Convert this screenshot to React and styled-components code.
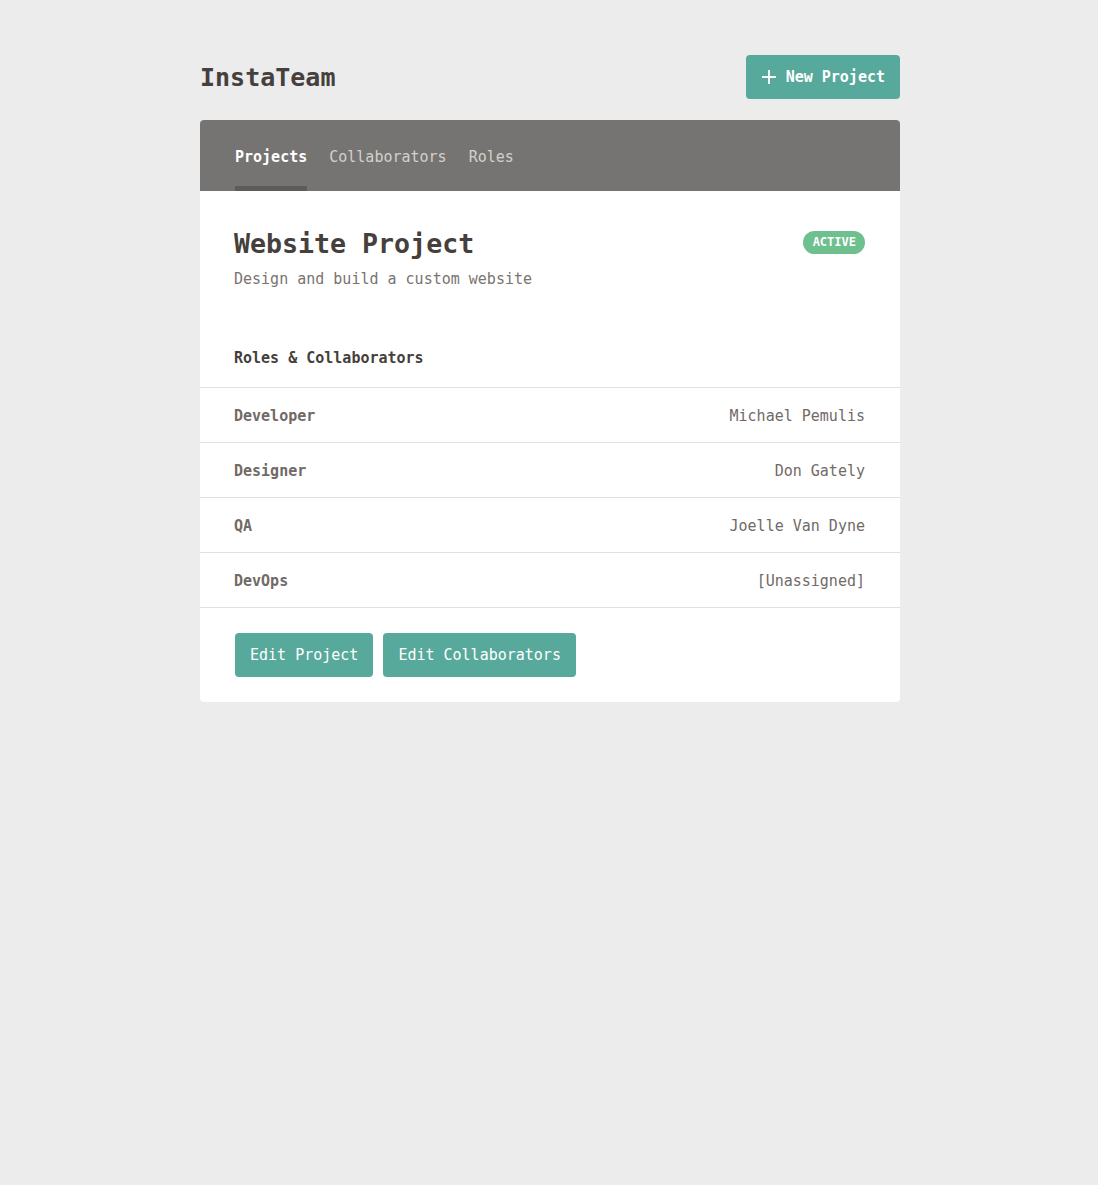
import React from 'react';
import styled, { createGlobalStyle } from 'styled-components';

const GlobalStyle = createGlobalStyle`
  body {
    margin: 0;
    padding-left: 2px;
    background-color: #ececec;
    font-family: 'DejaVu Sans Mono', 'Liberation Mono', monospace;
    color: #45403c;
  }
`;

const Page = styled.div`
  width: 700px;
  margin: 0 auto;
  padding-top: 55px;
`;

const Header = styled.header`
  display: flex;
  align-items: center;
  justify-content: space-between;
  height: 44px;
  margin-bottom: 21px;
`;

const Logo = styled.h1`
  margin: 0;
  font-size: 25px;
  font-weight: bold;
  color: #45403c;
`;

const Button = styled.button`
  display: inline-flex;
  align-items: center;
  gap: 10px;
  height: 44px;
  padding: 0 15px 0 ${(p) => (p.$bold ? '16px' : '15px')};
  border: none;
  border-radius: 4px;
  background-color: #57a99b;
  color: #fff;
  font-family: inherit;
  font-size: 15px;
  font-weight: ${(p) => (p.$bold ? 'bold' : 'normal')};
  cursor: pointer;
`;

const Card = styled.div`
  background-color: #fff;
  border-radius: 4px;
  overflow: hidden;
`;

const Nav = styled.nav`
  display: flex;
  gap: 22px;
  height: 71px;
  padding: 0 34px 0 35px;
  background-color: #767472;
`;

const Tab = styled.a`
  display: flex;
  align-items: center;
  font-size: 15px;
  font-weight: ${(p) => (p.$active ? 'bold' : 'normal')};
  color: ${(p) => (p.$active ? '#fff' : '#d3d0cd')};
  border-bottom: 5px solid ${(p) => (p.$active ? '#5e5c5a' : 'transparent')};
  padding-top: 7px;
  cursor: pointer;
`;

const Intro = styled.div`
  display: flex;
  justify-content: space-between;
  align-items: flex-start;
  padding: 36px 35px 0 34px;
`;

const Title = styled.h2`
  margin: 0;
  font-size: 26.6px;
  line-height: 34px;
  font-weight: bold;
  color: #45403c;
`;

const Subtitle = styled.p`
  margin: 8px 0 0;
  font-size: 15px;
  line-height: 20px;
  color: #7a7370;
`;

const Badge = styled.span`
  margin-top: 4px;
  padding: 0 9px 0 10px;
  height: 23px;
  line-height: 23px;
  border-radius: 12px;
  background-color: #6ec08f;
  color: #fff;
  font-size: 12px;
  font-weight: bold;
`;

const SectionTitle = styled.h3`
  margin: 0;
  padding: 59px 34px 19px;
  font-size: 15px;
  line-height: 20px;
  font-weight: bold;
  color: #45403c;
  border-bottom: 1px solid #e0e0e0;
`;

const Row = styled.div`
  box-sizing: border-box;
  display: flex;
  justify-content: space-between;
  align-items: center;
  height: 55px;
  padding: 2px 35px 0 34px;
  border-bottom: 1px solid #e0e0e0;
  font-size: 15px;
`;

const Role = styled.span`
  font-weight: bold;
  color: #716a66;
`;

const Person = styled.span`
  color: #716a66;
`;

const Actions = styled.div`
  display: flex;
  gap: 10px;
  padding: 25px 35px;
`;

const PlusIcon = () => (
  <svg width="14" height="14" viewBox="0 0 14 14" fill="none" stroke="#fff" strokeWidth="1.8">
    <path d="M7 0v14M0 7h14" />
  </svg>
);

const roles = [
  { role: 'Developer', person: 'Michael Pemulis' },
  { role: 'Designer', person: 'Don Gately' },
  { role: 'QA', person: 'Joelle Van Dyne' },
  { role: 'DevOps', person: '[Unassigned]' },
];

const App = () => (
  <>
    <GlobalStyle />
    <Page>
      <Header>
        <Logo>InstaTeam</Logo>
        <Button $bold>
          <PlusIcon />
          New Project
        </Button>
      </Header>
      <Card>
        <Nav>
          <Tab $active>Projects</Tab>
          <Tab>Collaborators</Tab>
          <Tab>Roles</Tab>
        </Nav>
        <Intro>
          <div>
            <Title>Website Project</Title>
            <Subtitle>Design and build a custom website</Subtitle>
          </div>
          <Badge>ACTIVE</Badge>
        </Intro>
        <SectionTitle>Roles &amp; Collaborators</SectionTitle>
        {roles.map((r) => (
          <Row key={r.role}>
            <Role>{r.role}</Role>
            <Person>{r.person}</Person>
          </Row>
        ))}
        <Actions>
          <Button>Edit Project</Button>
          <Button>Edit Collaborators</Button>
        </Actions>
      </Card>
    </Page>
  </>
);

export default App;
